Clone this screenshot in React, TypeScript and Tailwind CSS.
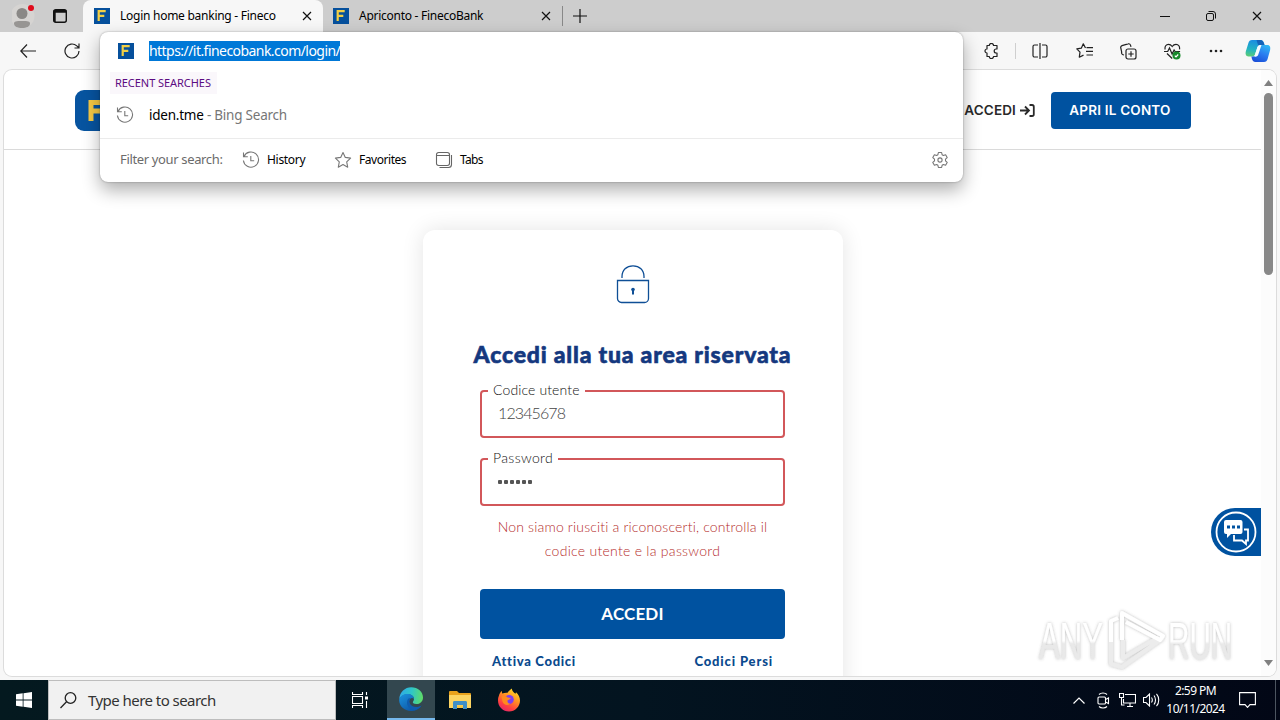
import React from 'react';

interface IconProps {
  className?: string;
}

interface FieldProps {
  label: string;
  labelClass: string;
  children: React.ReactNode;
}

const FinecoIcon = ({ className }: IconProps) => (
  <svg className={className} width="16" height="16" viewBox="0 0 16 16">
    <rect width="16" height="16" fill="#06509c" />
    <path d="M4.7 13V3.2h7M4.7 7.9h5.6" fill="none" stroke="#f2cf45" strokeWidth="2.2" />
  </svg>
);

const CloseIcon = ({ className }: IconProps) => (
  <svg className={className} width="10" height="10" viewBox="0 0 10 10" stroke="#111" strokeWidth="1.2">
    <path d="M1 1l8 8M9 1l-8 8" />
  </svg>
);

const HistoryIcon = () => (
  <svg width="18" height="18" viewBox="0 0 18 18" fill="none" stroke="#777" strokeWidth="1.1">
    <path d="M1.5 1.5v4.3h4.3M2 5.5A7.6 7.6 0 1 1 1.4 9.5M8.8 5v4.8h3.4" />
  </svg>
);

const StarIcon = () => (
  <svg width="18" height="18" viewBox="0 0 18 18" fill="none" stroke="#777" strokeWidth="1.1" strokeLinejoin="round">
    <path d="M9 1.5l2.3 4.9 5.3.7-3.9 3.7 1 5.4L9 13.6l-4.7 2.6 1-5.4L1.4 7.1l5.3-.7z" />
  </svg>
);

const TabsIcon = () => (
  <svg width="18" height="18" viewBox="0 0 18 18" fill="none" stroke="#666" strokeWidth="1.1">
    <rect x="1.5" y="1.5" width="13" height="13" rx="2.2" />
    <path d="M1.5 4.5h13M16.5 4v9.5a3 3 0 0 1-3 3H4.5" />
  </svg>
);

const GearIcon = () => (
  <svg width="18" height="18" viewBox="0 0 18 18" fill="none" stroke="#777" strokeWidth="1.1" strokeLinejoin="round">
    <path d="M7.4 1.5h3.2l.5 2.2 1.3.8 2.2-.7 1.6 2.8-1.7 1.5v1.8l1.7 1.5-1.6 2.8-2.2-.7-1.3.8-.5 2.2H7.4l-.5-2.2-1.3-.8-2.2.7-1.6-2.8 1.7-1.5V8.1L1.8 6.6l1.6-2.8 2.2.7 1.3-.8z" />
    <circle cx="9" cy="9" r="2.1" />
  </svg>
);

const CopilotIcon = () => (
  <svg width="26" height="24" viewBox="0 0 26 24">
    <defs>
      <linearGradient id="cpA" x1="0.2" y1="0" x2="0" y2="1">
        <stop offset="0" stopColor="#1a8fe0" />
        <stop offset="0.55" stopColor="#23b5c0" />
        <stop offset="1" stopColor="#62cf6e" />
      </linearGradient>
      <linearGradient id="cpB" x1="0.8" y1="0" x2="0.3" y2="1">
        <stop offset="0" stopColor="#2fb8f4" />
        <stop offset="0.5" stopColor="#2a7df0" />
        <stop offset="1" stopColor="#1a4fd8" />
      </linearGradient>
    </defs>
    <path d="M7 1h8.5c2.3 0 3 1.3 3.6 3.2l.5 1.8h-4c-2 0-2.8 1-3.4 3l-2 6c-.5 1.500-1.300 2.500-3 2.500H3.500C.8 17.500.2 15 .8 12.600L3.400 4C4 2 5 1 7 1z" fill="url(#cpA)" />
    <path d="M15 1c2.600 0 3.200 1.400 3.800 3.200l.6 1.800h-4.200c-.8 0-1.500.2-2 .6L11.500 1z" fill="#1463b8" />
    <path d="M19 23h-8.500c-2.300 0-3-1.300-3.600-3.200l-.5-2.300h1.400c2 0 3-1 3.600-3l1.800-5.500c.6-1.900 1.400-3 3.200-3h6c2.700 0 3.300 2.500 2.700 4.900L22.600 20c-.6 2-1.600 3-3.600 3z" fill="url(#cpB)" />
    <path d="M12.300 8.500c.5-1.500 1.200-2.500 3-2.500h1.200l-3.200 9.500c-.5 1.400-1.200 2.200-2.800 2.200H9.300z" fill="#f4fbff" />
  </svg>
);

const EdgeIcon = () => (
  <svg width="24" height="24" viewBox="0 0 24 24">
    <defs>
      <linearGradient id="edTop" x1="0" y1="0.4" x2="1" y2="0.5">
        <stop offset="0" stopColor="#2fa9e8" />
        <stop offset="0.5" stopColor="#2fc6c8" />
        <stop offset="1" stopColor="#5fdc66" />
      </linearGradient>
      <linearGradient id="edBot" x1="0" y1="0" x2="0.8" y2="1">
        <stop offset="0" stopColor="#1b94e0" />
        <stop offset="1" stopColor="#0c4f9e" />
      </linearGradient>
    </defs>
    <path d="M.3 12C.6 5 6 .2 12.200.2 19 .2 24 5 24 10.400c0 4-3 6.600-6.600 6.600-3 0-4-1.300-3.400-2.300.7-.9 1-1.600 1-2.600C15 9 12 7.300 9 7.300c-4 0-7 1.700-8.700 4.700z" fill="url(#edTop)" />
    <path d="M.2 12.500C1 9 4.500 7 8.700 7c3.300 0 6.300 2 6.300 5-1-1.200-2.500-1.500-3.500-.5-3 2.500-1 7.500 3.500 8.500 3 .6 5.600-.3 7.500-1.600C20.500 21.800 16.500 24 12 24 5 24-.3 18.500.2 12.500z" fill="url(#edBot)" />
    <path d="M8.700 12.500C6.500 17 9.500 22.800 15.500 23.300c2.800-.6 5.300-2.500 7-4.900-4 2.400-9 1.900-11.200-1-1.300-1.700-1.200-4 .2-5.900-1.200-.4-2.200 0-2.800 1z" fill="#0f5cae" />
  </svg>
);

const FolderIcon = () => (
  <svg width="22" height="20" viewBox="0 0 22 20">
    <path d="M0 2.200C0 1.500.5 1 1.200 1H8l2 2h10.800c.7 0 1.200.5 1.200 1.200V17H0z" fill="#e9a21c" />
    <path d="M0 5h22v13H0z" fill="#fcd462" />
    <path d="M4 19v-6.500c0-1 .6-1.500 1.500-1.500h11c.9 0 1.500.5 1.500 1.500V19h-4v-4H8v4z" fill="#3f8fc8" />
    <path d="M8 15.500h6V18H8z" fill="#f6c646" />
  </svg>
);

const FirefoxIcon = () => (
  <svg width="24" height="24" viewBox="0 0 24 24">
    <defs>
      <linearGradient id="ffBody" x1="0.8" y1="0" x2="0.25" y2="1">
        <stop offset="0" stopColor="#ffe226" />
        <stop offset="0.4" stopColor="#ff9422" />
        <stop offset="0.75" stopColor="#ff4040" />
        <stop offset="1" stopColor="#e3256b" />
      </linearGradient>
    </defs>
    <path d="M2 7.500C2.500 5.500 3.500 4 4.800 3l.4 2.600C7 4.800 9 4.500 10.500 4.800 11.500 3.200 13 1.500 14.800.4c.2 2.500 1.800 3.800 3.700 5.400l.5-1.600c2.500 2 4 5.200 4 8.300C23 18.700 18 23.500 12 23.500S1 18.800 1 12.500c0-2 .3-3.400 1-5z" fill="url(#ffBody)" />
    <circle cx="12.200" cy="11.600" r="4.600" fill="#7b3ff0" />
    <path d="M4.500 8.500c2.500-.8 4.500-.5 6.200 1l3 .4c-.3 1.500-2 1.700-3.200 2.500-.3 2 .8 3.400 3 3.200-2.500 2.500-7 1.500-8-2-.4-1.700-.8-3.300-1-5.100z" fill="#ff8a1e" />
  </svg>
);

function TabStrip() {
  return (
    <div className="flex h-8 shrink-0 bg-[#cdcdcd] text-[12px] text-black">
      <div className="flex w-[83px] items-center pl-3">
        <svg width="24" height="26" viewBox="0 0 24 26">
          <circle cx="10.500" cy="13" r="12" fill="#d6d4d2" />
          <circle cx="10" cy="10.500" r="5.500" fill="#8a8886" />
          <path d="M2 20.500c0-2 2-2.500 8-2.500s8 .5 8 2.500c0 3-3.500 4.500-8 4.500s-8-1.500-8-4.500z" fill="#979593" />
          <circle cx="19" cy="5" r="3" fill="#e00b1c" />
        </svg>
        <svg className="ml-[17px]" width="14" height="14" viewBox="0 0 14 14">
          <rect x="0.700" y="0.700" width="12.600" height="12.600" rx="2" fill="none" stroke="#111" strokeWidth="1.400" />
          <path d="M0.700 1h12.600v2.700H0.700zM.7 3h2v10h-2z" fill="#111" />
        </svg>
      </div>
      <div className="flex w-[240px] items-center rounded-t-lg bg-[#f7f7f7] pl-[11px]">
        <FinecoIcon />
        <span className="ml-[10px] w-[182px] whitespace-nowrap tracking-[-0.260px]">Login home banking - Fineco</span>
        <CloseIcon />
      </div>
      <div className="flex w-[239px] items-center pl-[10px]">
        <FinecoIcon />
        <span className="ml-[10px] w-[182px] whitespace-nowrap tracking-[-0.270px]">Apriconto - FinecoBank</span>
        <CloseIcon />
      </div>
      <div className="mt-[6px] h-5 w-px bg-[#888]" />
      <svg className="ml-[10px] mt-[9px]" width="14" height="14" viewBox="0 0 14 14" stroke="#111" strokeWidth="1.200">
        <path d="M7 0v14M0 7h14" />
      </svg>
      <div className="ml-auto flex items-center gap-9 pr-[18px]">
        <svg width="10" height="10" viewBox="0 0 10 10"><path d="M0 5.500h10" stroke="#111" /></svg>
        <svg width="10" height="10" viewBox="0 0 10 10" fill="none" stroke="#111">
          <rect x="0.500" y="2.500" width="7" height="7" rx="1.500" />
          <path d="M2.500.5H7A2.500 2.500 0 0 1 9.500 3v4.500" />
        </svg>
        <CloseIcon />
      </div>
    </div>
  );
}

function Toolbar() {
  return (
    <div className="flex h-[38px] shrink-0 items-center bg-[#f7f7f7] pl-5">
      <svg width="16" height="14" viewBox="0 0 16 14" fill="none" stroke="#222" strokeWidth="1.200">
        <path d="M7 .5L.8 7 7 13.500M.8 7H16" />
      </svg>
      <svg className="ml-7" width="16" height="16" viewBox="0 0 16 16" fill="none" stroke="#222" strokeWidth="1.200">
        <path d="M15 8a7 7 0 1 1-2.200-5.100L15 5M15 .5V5h-4.500" />
      </svg>
      <div className="ml-auto flex items-center pr-[9px]">
        <svg width="16" height="16" viewBox="0 0 16 16" fill="none" stroke="#222" strokeWidth="1.200" strokeLinejoin="round">
          <path d="M4 2.500h2.300a2.100 2.100 0 0 1 4.200 0H14V6h-.8a2 2 0 0 0 0 4h.8v3.500h-3.500a2.100 2.100 0 0 1-4.200 0H4V10a2 2 0 1 1 0-4z" />
        </svg>
        <div className="ml-4 h-4 w-px bg-[#cfcfcf]" />
        <svg className="ml-4" width="16" height="16" viewBox="0 0 16 16" fill="none" stroke="#222" strokeWidth="1.200">
          <path d="M6 2H2.500A1.500 1.500 0 0 0 1 3.500v9A1.500 1.500 0 0 0 2.500 14H6M8 0v16M10 2h3.500A1.500 1.500 0 0 1 15 3.500v9a1.500 1.500 0 0 1-1.500 1.500H10" />
        </svg>
        <svg className="ml-7" width="17" height="16" viewBox="0 0 17 16" fill="none" stroke="#222" strokeWidth="1.200" strokeLinejoin="round">
          <path d="M9.500 5L7.300.8 5.300 5.200.8 5.900 4 9.200l-.7 5 4.200-2.100M10.500 4.700H17M10 8.300h7M10.500 12H17" />
        </svg>
        <svg className="ml-[27px]" width="17" height="17" viewBox="0 0 17 17" fill="none" stroke="#222" strokeWidth="1.200">
          <rect x="6" y="6" width="10" height="10" rx="2" />
          <path d="M11 8.300v5.400M8.300 11h5.400M4 12l-1-.3a2 2 0 0 1-1.300-2.500L.8 5A2 2 0 0 1 2 2.600l6-1.700a2 2 0 0 1 2.500 1.200l.5 1.700" />
        </svg>
        <svg className="ml-[27px]" width="17" height="17" viewBox="0 0 17 17" fill="none" stroke="#222" strokeWidth="1.200">
          <path d="M1.200 6.500C.4 3.500 2.200 1.300 4.500 1.300c1.700 0 2.800.9 3.700 2.200.9-1.300 2-2.200 3.800-2.200 2.500 0 4 2.200 3.500 5M0 8.500h3.700l1.800-3.500 2.600 6 2-4 1 1.500h5M3 10.500l5.200 5" />
          <circle cx="12.500" cy="12.500" r="4" fill="#188a2c" stroke="none" />
          <path d="M10.800 12.600l1.200 1.200 2.200-2.300" stroke="#fff" />
        </svg>
        <svg className="ml-7" width="14" height="4" viewBox="0 0 14 4" fill="#222">
          <circle cx="2" cy="2" r="1.300" /><circle cx="7" cy="2" r="1.300" /><circle cx="12" cy="2" r="1.300" />
        </svg>
        <div className="ml-[22px]"><CopilotIcon /></div>
      </div>
    </div>
  );
}

function AddressPopup() {
  return (
    <div className="absolute left-[100px] top-8 flex h-[150px] w-[863px] flex-col rounded-lg bg-white shadow-[0_0_2px_rgba(0,0,0,0.35),0_8px_18px_rgba(0,0,0,0.32)]">
      <div className="flex h-[38px] items-center pl-[18px]">
        <FinecoIcon />
        <span className="ml-[15px] h-5 whitespace-nowrap bg-[#0078d7] text-[14px] leading-[19px] tracking-[-0.550px] text-white">
          https://it.finecobank.com/login/
        </span>
      </div>
      <div className="ml-[10px] mt-[2px] flex h-[22px] w-[107px] items-center whitespace-nowrap bg-[#faf7fb] pl-[5px] text-[11px] tracking-[-0.050px] text-[#5c0b82]">
        RECENT SEARCHES
      </div>
      <div className="flex h-[42px] items-center pl-4 text-[13.500px] text-black">
        <HistoryIcon />
        <span className="ml-[15px] whitespace-nowrap tracking-[-0.230px]">
          iden.tme <span className="text-[#767676]">- Bing Search</span>
        </span>
      </div>
      <div className="mt-[2px] flex flex-1 items-center border-t border-[#ebebeb] pb-px pl-5 pr-[14px] text-[12px] tracking-[-0.300px] text-black">
        <span className="w-[122px] whitespace-nowrap text-[13px] tracking-[-0.350px] text-[#6b6b6b]">Filter your search:</span>
        <HistoryIcon />
        <span className="ml-[7px] w-[67px]">History</span>
        <StarIcon />
        <span className="ml-[7px] w-[76px] tracking-[-0.450px]">Favorites</span>
        <TabsIcon />
        <span className="ml-[7px] tracking-[-0.700px]">Tabs</span>
        <div className="ml-auto"><GearIcon /></div>
      </div>
    </div>
  );
}

function Field({ label, labelClass, children }: FieldProps) {
  return (
    <div className="relative flex h-12 items-center rounded border-2 border-[#d2575a] pl-4 text-[#444]">
      <span className={`absolute -top-3 left-[6px] whitespace-nowrap bg-white px-[5px] text-[14px] leading-5 text-[#111] ${labelClass}`}>
        {label}
      </span>
      {children}
    </div>
  );
}

function LoginCard() {
  return (
    <div className="mx-auto mt-20 flex h-[520px] w-[420px] shrink-0 flex-col items-center rounded-xl bg-white pt-[35px] shadow-[0_0_22px_rgba(0,0,0,0.11)]">
      <svg width="34" height="39" viewBox="0 0 34 39" fill="none" stroke="#0f4f96" strokeWidth="1.300">
        <path d="M6 13v-1.500C6 5 10.500.8 17 .8S28 5 28 11.500V13M1.500 15.500h31v18a4 4 0 0 1-4 4h-23a4 4 0 0 1-4-4z" />
        <circle cx="17" cy="24.500" r="1.800" fill="#0f4f96" stroke="none" />
        <path d="M17 25v4.500" strokeWidth="2" />
      </svg>
      <h1 className="mt-[34px] whitespace-nowrap font-['Lato'] text-[23px] font-black leading-8 tracking-[0.800px] text-[#14387f] [-webkit-text-stroke:0.6px_#14387f]">
        Accedi alla tua area riservata
      </h1>
      <form className="mt-5 flex w-[305px] flex-col font-['Lato'] font-light">
        <Field label="Codice utente" labelClass="tracking-[0.120px]">
          <span className="-mt-[3px] text-[16px] tracking-[-0.900px]">12345678</span>
        </Field>
        <div className="mt-5">
          <Field label="Password" labelClass="tracking-[0.350px]">
            <div className="flex gap-[2px]">
              {[0, 1, 2, 3, 4, 5].map(i => (
                <span key={i} className="h-1 w-1 rounded-[1px] bg-[#555]" />
              ))}
            </div>
          </Field>
        </div>
        <p className="mt-[9px] text-center text-[14px] leading-6 tracking-[0.170px] text-[#b52c2b]">
          Non siamo riusciti a riconoscerti, controlla il<br />
          <span className="tracking-[0.280px]">codice utente e la password</span>
        </p>
        <button type="button" className="mt-[26px] h-[50px] rounded bg-[#0052a0] pb-px text-[17px] font-bold tracking-[0.150px] text-white">
          ACCEDI
        </button>
        <div className="mt-3 flex justify-between px-3 text-[13px] font-black leading-5 tracking-[0.700px] text-[#0b4a8e]">
          <span>Attiva Codici</span>
          <span className="tracking-[0.850px]">Codici Persi</span>
        </div>
      </form>
    </div>
  );
}

function Watermark() {
  return (
    <svg className="absolute left-[1030px] top-[604px]" width="215" height="74" viewBox="0 0 215 74">
      <defs>
        <filter id="wmShadow" x="-10%" y="-10%" width="120%" height="120%">
          <feDropShadow dx="0" dy="0" stdDeviation="1.800" floodColor="#666" floodOpacity="0.450" />
        </filter>
        <linearGradient id="wmFill" x1="0" y1="0" x2="0" y2="1">
          <stop offset="0.5" stopColor="#ffffff" />
          <stop offset="0.550" stopColor="#e9e9e9" />
        </linearGradient>
      </defs>
      <g filter="url(#wmShadow)" fill="url(#wmFill)" fontFamily="Liberation Sans" fontSize="52">
        <text transform="translate(9 55) scale(0.6 1)">ANY</text>
        <text transform="translate(138 55) scale(0.57 1)">RUN</text>
        <g fill="none" strokeWidth="4" strokeLinejoin="round">
          <path d="M133 34L92 63l-11-3V38M93 36v18l36-21" stroke="#ececec" />
          <path d="M81 38V17l7-3M92 36V9l41 23-3 4-34-18" stroke="#fff" />
        </g>
      </g>
    </svg>
  );
}

function WebPage() {
  return (
    <div className="mx-1 mb-1 flex h-[606px] shrink-0 overflow-hidden rounded-lg bg-white shadow-[0_0_0_1px_#dcdcdc]">
      <div className="flex flex-1 flex-col overflow-hidden">
        <header className="flex h-20 shrink-0 items-center border-b border-[#dadada] pl-[71px] pr-[70px] pt-[2px] font-['Inter']">
          <svg width="41" height="41" viewBox="0 0 41 41">
            <rect width="41" height="41" rx="9" fill="#0754a0" />
            <path d="M16 31V12.500h14M16 21h11" fill="none" stroke="#f6c944" strokeWidth="5" />
          </svg>
          <div className="ml-auto flex items-center text-[13.500px] font-semibold text-[#2a2a2a]">
            <span className="tracking-[0.150px]">ACCEDI</span>
            <svg className="ml-1" width="15" height="13" viewBox="0 0 15 13" fill="none" stroke="#2a2a2a" strokeWidth="1.800">
              <path d="M0 6.500h8.500M5 2.500l4 4-4 4M9.500 1H12a1.800 1.800 0 0 1 1.800 1.800v7.400A1.800 1.800 0 0 1 12 12H9.500" />
            </svg>
            <button type="button" className="ml-4 h-[37px] w-[140px] rounded bg-[#0052a0] pr-[2px] text-[13.500px] tracking-[0.200px] text-white">
              APRI IL CONTO
            </button>
          </div>
        </header>
        <LoginCard />
      </div>
      <div className="flex w-[15px] shrink-0 flex-col items-center bg-[#fcfcfc]">
        <svg className="mt-[10px]" width="9" height="6" viewBox="0 0 9 6"><path d="M4.500 0L9 6H0z" fill="#808080" /></svg>
        <div className="mt-[7px] h-[182px] w-[9px] rounded-full bg-[#888]" />
        <svg className="mb-[10px] mt-auto" width="9" height="6" viewBox="0 0 9 6"><path d="M0 0h9L4.500 6z" fill="#808080" /></svg>
      </div>
    </div>
  );
}

function ChatButton() {
  return (
    <div className="absolute left-[1211px] top-[508px] flex h-12 w-[50px] items-center rounded-l-full bg-[#0052a0] pl-1">
      <svg width="42" height="42" viewBox="0 0 42 42">
        <circle cx="21" cy="21" r="19.500" fill="none" stroke="#fff" strokeWidth="1.800" />
        <path d="M19 24v5.500h8l4 3.500v-3.500h2V18.500H29" fill="none" stroke="#fff" strokeWidth="1.800" />
        <path d="M11 9h14.500a2 2 0 0 1 2 2v10a2 2 0 0 1-2 2H16l-4 4v-4h-1a2 2 0 0 1-2-2V11a2 2 0 0 1 2-2z" fill="#fff" />
        <path d="M12 14.500h3v3h-3zM17 14.500h3v3h-3zM22 14.500h3v3h-3z" fill="#0052a0" />
      </svg>
    </div>
  );
}

function Taskbar() {
  return (
    <div className="flex h-10 shrink-0 items-center bg-linear-to-r from-[#04191f] via-[#031420] to-[#020716]">
      <div className="flex w-12 justify-center">
        <svg width="16" height="16" viewBox="0 0 16 16" fill="#fff">
          <path d="M0 2.300L6.700 1.300v6.300H0zM7.500 1.200L16 0v7.600H7.500zM0 8.400h6.700v6.300L0 13.700zM7.500 8.400H16V16l-8.500-1.200z" />
        </svg>
      </div>
      <div className="flex h-10 w-72 items-center border border-[#bdbdbd] bg-[#f1f1f1] pl-[11px] text-[15px] text-[#333]">
        <svg width="17" height="17" viewBox="0 0 17 17" fill="none" stroke="#222" strokeWidth="1.300">
          <circle cx="10.500" cy="6" r="5.300" />
          <path d="M6.500 9.800L.5 16" />
        </svg>
        <span className="ml-[11px] whitespace-nowrap tracking-[-0.550px]">Type here to search</span>
      </div>
      <svg className="ml-4" width="17" height="16" viewBox="0 0 17 16" fill="none" stroke="#fff" strokeWidth="1.100">
        <path d="M.5 0v2.500h10V0M.5 16v-2.500h10V16M.5 4.500h10v7H.5zM14.500 0v3M14.500 9v7" />
        <path d="M13 4.500h3v3h-3z" fill="#fff" stroke="none" />
      </svg>
      <div className="ml-[18px] flex h-10 w-12 items-center justify-center border-b-2 border-[#76b9ed] bg-[#33474f]">
        <EdgeIcon />
      </div>
      <div className="ml-[14px]"><FolderIcon /></div>
      <div className="ml-[26px]"><FirefoxIcon /></div>
      <div className="ml-auto flex h-10 items-center text-white">
        <svg width="12" height="7" viewBox="0 0 12 7" fill="none" stroke="#fff" strokeWidth="1.200"><path d="M.5 6.500L6 1l5.500 5.500" /></svg>
        <svg className="ml-3" width="13" height="17" viewBox="0 0 13 17" fill="none" stroke="#fff" strokeWidth="1.100">
          <rect x="1" y="5" width="7.500" height="7" rx="1" />
          <path d="M8.500 7.500L11.500 6v5.500l-3-1.500M2 2.500c2-2 6-2 8 0M2 14.500c2 2 6 2 8 0" />
        </svg>
        <svg className="ml-[9px]" width="17" height="14" viewBox="0 0 17 14" fill="none" stroke="#fff" strokeWidth="1.100">
          <path d="M6 1.500h10.500v8.500H4.500V6M8 13.500h6M11 10v3.500M.5.500h4v4h-4zM2.500 4.500V12h3" />
        </svg>
        <svg className="ml-[7px]" width="17" height="14" viewBox="0 0 17 14" fill="none" stroke="#fff" strokeWidth="1.100">
          <path d="M.5 4.500H3L6.500 1v12L3 9.500H.5zM8.500 4.500c1 1.500 1 3.500 0 5M11 2.500c2 2.500 2 6.500 0 9M13.500.8c3 3.500 3 9 0 12.400" />
        </svg>
        <div className="ml-[6px] w-[59px] whitespace-nowrap text-center text-[12px] leading-[18px] tracking-[-0.550px]">
          2:59 PM<br />10/11/2024
        </div>
        <svg className="ml-[14px] mr-[19px]" width="17" height="16" viewBox="0 0 17 16" fill="none" stroke="#fff" strokeWidth="1.100">
          <path d="M.6.600h15.800v12H11l-2.500 2.800L6 12.600H.6z" />
        </svg>
        <div className="mr-1 h-10 w-px bg-[#4c5560]" />
      </div>
    </div>
  );
}

export default function App() {
  return (
    <div className="relative flex h-[720px] w-[1280px] flex-col overflow-hidden bg-[#f7f7f7] font-['Noto_Sans',sans-serif]">
      <TabStrip />
      <Toolbar />
      <WebPage />
      <Taskbar />
      <ChatButton />
      <Watermark />
      <AddressPopup />
    </div>
  );
}
